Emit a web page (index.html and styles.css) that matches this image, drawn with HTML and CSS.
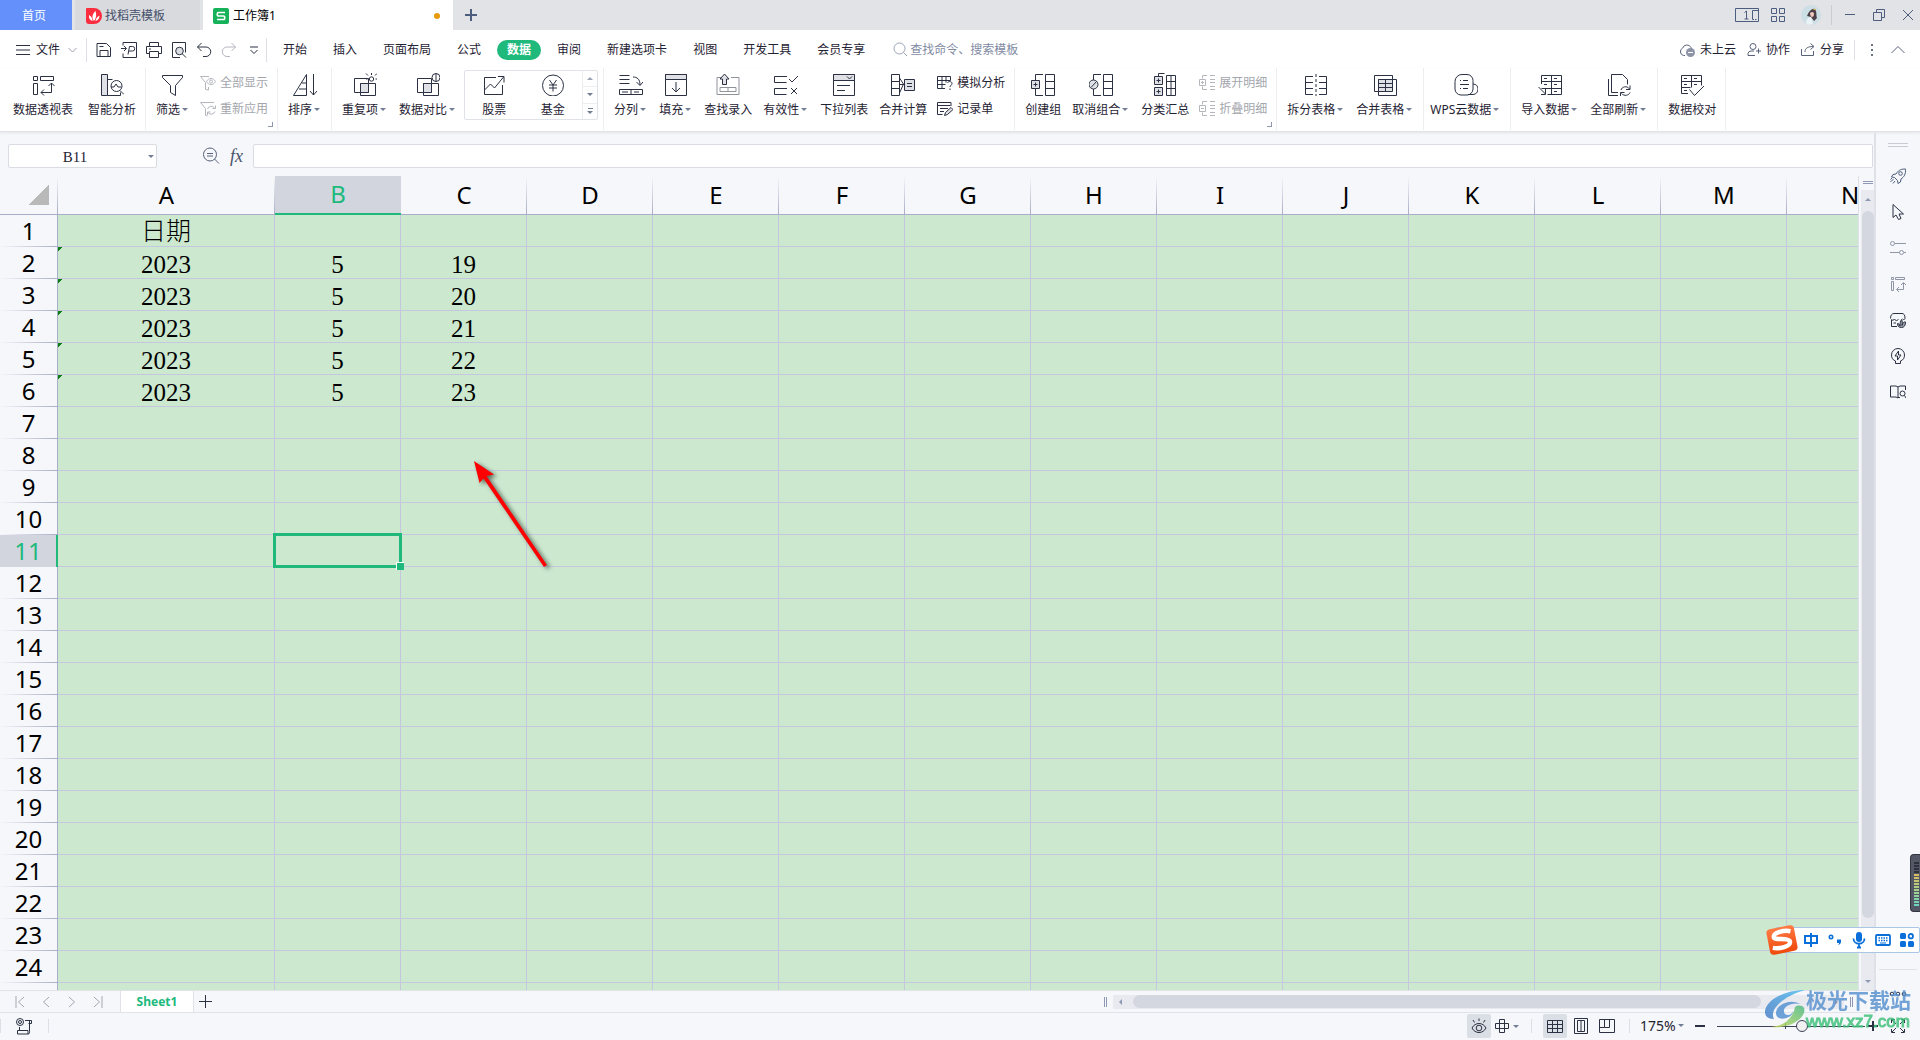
FILE: index.html
```html
<!DOCTYPE html>
<html lang="zh-CN">
<head>
<meta charset="utf-8">
<title>工作簿1</title>
<link rel="stylesheet" href="styles.css">
</head>
<body>
<header class="titlebar">
  <nav class="doc-tabs">
    <button class="doc-tab home">首页</button>
    <button class="doc-tab template">
      <svg width="16" height="16" viewBox="0 0 16 16"><path d="M1 0h7a8 8 0 0 1 0 16H3a3 3 0 0 1-3-3V1a1 1 0 0 1 1-1z" fill="#fb2d3f"/><path d="M8 13C5.500 10.500 6 6 9.500 3c1.200 3.500 1 7-1.500 10zM6.500 13C4 12.500 2.500 10 3 7c2 1 3.500 3 3.500 6zM9.500 13c.3-2.500 1.800-4.500 4-5.200 0 2.600-1.500 4.700-4 5.200z" fill="#fff"/></svg>
      <span>找稻壳模板</span></button>
    <button class="doc-tab active">
      <svg width="16" height="16" viewBox="0 0 16 16"><rect width="16" height="16" rx="2" fill="#15b25a"/><path d="M12 4.500H5.500a1.200 1.200 0 0 0-1.200 1.200v1A1.200 1.200 0 0 0 5.500 8h5a1.200 1.200 0 0 1 1.200 1.200v1a1.200 1.200 0 0 1-1.200 1.300H4" fill="none" stroke="#fff" stroke-width="1.600"/></svg>
      <span>工作簿1</span><i class="unsaved"></i></button>
    <button class="icon-btn new-tab" aria-label="新建"><svg width="12" height="12" viewBox="0 0 12 12"><path d="M6 0v12M0 6h12" stroke="#4d5d7e" stroke-width="2"/></svg></button>
  </nav>
  <div class="window-tools">
    <svg class="ic-blue" width="24" height="14" viewBox="0 0 24 14"><path d="M.5.5h23v13H.500zM23 2.500h-5.500v9h1.500"/><path d="M9.500 4.500l2-1.500v8M9.500 11h4M20 11.500h1.500"/></svg>
    <svg class="ic-blue" width="14" height="14" viewBox="0 0 14 14"><path d="M.5.500h5v5h-5zM8.500.500h5v5h-5zM.5 8.500h5v5h-5zM8.500 8.500h5v5h-5z"/></svg>
    <svg class="avatar" width="20" height="20" viewBox="0 0 20 20"><circle cx="10" cy="10" r="10" fill="#ccdfe4"/><path d="M6 11C8 6 11 3 14 4c2 2 1 7 2 9l-3 3-3-4z" fill="#4c3f48"/><path d="M9 8c2-2 4-1 4 1s-1 3-2 3-2-2-2-4z" fill="#f0c9bb"/><path d="M5 18c0-4 3-6 5-6l2 7c-3 1-5 1-7-1z" fill="#e9f2f4"/><path d="M12 4l3 1" stroke="#d7b55b"/></svg>
    <i class="vsep"></i>
    <button class="icon-btn" aria-label="最小化"><svg class="ic-blue" width="12" height="12" viewBox="0 0 12 12"><path d="M1 5.500h10"/></svg></button>
    <button class="icon-btn" aria-label="还原"><svg class="ic-blue" width="12" height="12" viewBox="0 0 12 12"><path d="M.5 3.500h8v8h-8zM3.500 3V.500h8v8H9"/></svg></button>
    <button class="icon-btn" aria-label="关闭"><svg class="ic-blue" width="12" height="12" viewBox="0 0 12 12"><path d="M1 1l10 10M11 1L1 11"/></svg></button>
  </div>
</header>

<div class="menubar">
  <button class="file-btn"><svg width="14" height="12" viewBox="0 0 14 12"><path d="M0 1.500h14M0 6h14M0 10.500h14"/></svg><span>文件</span><svg class="chev" width="9" height="6" viewBox="0 0 9 6"><path d="M.5 1l4 4 4-4"/></svg></button>
  <i class="vsep"></i>
  <div class="quick">
    <button aria-label="保存"><svg width="16" height="16" viewBox="0 0 16 16"><path d="M1 1.500h9.500l4 4v9H1zM4 14V8.500h8V14M3.500 4.500h4"/></svg></button>
    <button aria-label="输出为PDF"><svg width="16" height="16" viewBox="0 0 16 16"><path d="M2 3.500v-3h13.500v15H2v-4M0 6.500h5M3 4l2.500 2.500L3 9M7 12.500L8.500 4.500h3a2 2 0 0 1 0 4.500H8"/></svg></button>
    <button aria-label="打印"><svg width="16" height="16" viewBox="0 0 16 16"><path d="M3.500 4.500v-4h9v4M3.500 11.500h-3v-7h15v7h-3M3.500 9.500h9v6h-9zM3 7h2"/></svg></button>
    <button aria-label="打印预览"><svg width="16" height="16" viewBox="0 0 16 16"><path d="M9 15.500H1.500V.500h13v10"/><circle cx="8.500" cy="9" r="3.800" fill="#dcdee3"/><path d="M11.500 12l3.500 3.500"/></svg></button>
    <button aria-label="撤销"><svg width="16" height="16" viewBox="0 0 16 16"><path d="M5.500 1L1.500 5l4 4M1.500 5H10a4.700 4.700 0 0 1 0 9.500H7"/></svg></button>
    <button class="off" aria-label="恢复"><svg width="16" height="16" viewBox="0 0 16 16"><path d="M10.500 1l4 4-4 4M14.500 5H6a4.700 4.700 0 0 0 0 9.500h3"/></svg></button>
    <button aria-label="更多"><svg width="10" height="10" viewBox="0 0 10 10"><path d="M1 2h8M1.500 5L5 8.500 8.500 5"/></svg></button>
  </div>
  <i class="vsep"></i>
  <nav class="tabs">
    <button>开始</button><button>插入</button><button>页面布局</button><button>公式</button><button class="on">数据</button><button>审阅</button><button>新建选项卡</button><button>视图</button><button>开发工具</button><button>会员专享</button>
  </nav>
  <label class="search"><svg width="15" height="15" viewBox="0 0 15 15"><circle cx="6.500" cy="6.500" r="5.500"/><path d="M10.500 10.500L14 14"/></svg><input type="text" placeholder="查找命令、搜索模板" aria-label="查找命令、搜索模板"></label>
  <div class="share">
    <button><svg width="16" height="14" viewBox="0 0 16 14"><path d="M6 12.500H4.500a4 4 0 0 1-.8-7.500A4.500 4.500 0 0 1 12 4.500l1 2"/><circle cx="11.500" cy="9.500" r="4.500" fill="#8d94a8" stroke="none"/><path d="M9 9.500h5" stroke="#fff"/></svg><span>未上云</span></button>
    <button><svg width="14" height="14" viewBox="0 0 14 14"><circle cx="6" cy="3.500" r="3"/><path d="M8 12.500H1v-2a3 3 0 0 1 3-2.500h3M9 8h5M11.500 5.500v5"/></svg><span>协作</span></button>
    <button><svg width="14" height="14" viewBox="0 0 14 14"><path d="M.5 6v6.500h12V8M4 9c0-4 3-5.500 8.500-5.500M9.500.500l3.500 3-3.500 3"/></svg><span>分享</span></button>
    <i class="vsep"></i>
    <button aria-label="更多选项"><svg class="dots" width="4" height="14" viewBox="0 0 4 14"><path d="M1 1h2v2H1zM1 6h2v2H1zM1 11h2v2H1z"/></svg></button>
    <button aria-label="收起功能区"><svg width="14" height="9" viewBox="0 0 14 9"><path d="M.5 8L7 1.500 13.500 8"/></svg></button>
  </div>
</div>

<div class="ribbon">
  <section class="group first">
    <button class="tool"><svg width="24" height="24" viewBox="0 0 24 24"><path d="M2.500 4.500h4v4h-4zM9.500 4.500h13v4h-13zM2.500 11.500h4v11h-4zM10 20.500h10.500V11M13 17.500l-3 3 3 3M17.500 14l3-3 3 3"/></svg><span>数据透视表</span></button>
    <button class="tool"><svg width="24" height="24" viewBox="0 0 24 24"><path class="f" d="M1.500 2.500h6v21h-6z"/><path d="M7.500 7.500h5M7.500 23.500h13v-3"/><circle cx="16.500" cy="14" r="5.500"/><path d="M20 18.500l4 4M11 15h3l2-3 2 3h3"/></svg><span>智能分析</span></button>
  </section>
  <section class="group">
    <button class="tool drop"><svg width="24" height="24" viewBox="0 0 24 24"><path d="M1.500 3.500h20v2l-7 8v10l-5-3v-7l-8-8z"/></svg><span>筛选</span></button>
    <div class="stack off">
      <button><svg width="16" height="16" viewBox="0 0 16 16"><path d="M9 1.500H.500l5 6v7l3 .5v-3"/><path d="M6.500 6.500c2-4 7-4 9 0-2 4-7 4-9 0z"/><circle cx="11" cy="6.500" r="1.500"/></svg><span>全部显示</span></button>
      <button><svg width="16" height="16" viewBox="0 0 16 16"><path d="M14 1.500H.500l5 6v7l2 .5M7.500 8a4 4 0 0 1 7-1M15.500 4.500V7.500h-3M15 10.500a4 4 0 0 1-7 1M7.500 14v-3h3"/></svg><span>重新应用</span></button>
    </div>
    <i class="launcher"></i>
  </section>
  <section class="group">
    <button class="tool drop"><svg width="24" height="24" viewBox="0 0 24 24"><path d="M13.500 2.500v21H.500zM9 11h4.500M6 17h7.500M20.500 2v21M17 19l3.500 4 3.500-4"/></svg><span>排序</span></button>
  </section>
  <section class="group">
    <button class="tool drop"><svg width="24" height="24" viewBox="0 0 24 24"><path d="M1.500 6.500h14v14h-14z"/><path d="M7.500 11.500h15v12h-15z"/><path class="f" d="M7.500 11.500h8v9h-8z"/><circle cx="18.500" cy="7" r="2.200"/><path d="M18.500 1v2M13 1.500l2 2M24 1.500l-2 2M13 7h1.500M22.500 7H25"/></svg><span>重复项</span></button>
    <button class="tool drop"><svg width="24" height="24" viewBox="0 0 24 24"><path d="M1.500 6.500h14v14h-14z"/><path d="M7.500 11.500h15v12h-15z"/><path class="f" d="M7.500 11.500h8v9h-8z"/><circle cx="20" cy="5.500" r="4" fill="#fff"/><path d="M20 1.500v8"/></svg><span>数据对比</span></button>
    <div class="gallery">
      <button class="tool"><svg width="24" height="24" viewBox="0 0 24 24"><path d="M14 5.500H2.500v17h18V13M2.500 18l6-6 4 4L21.500 5M16 4.500h6v6"/></svg><span>股票</span></button>
      <button class="tool"><svg width="24" height="24" viewBox="0 0 24 24"><circle cx="12" cy="13.500" r="10.500"/><path d="M8.500 8l3.500 5 3.500-5M8 13h8M8 16h8M12 13v6.500"/></svg><span>基金</span></button>
      <div class="spin"><button class="up" aria-label="上一行"></button><button class="down" aria-label="下一行"></button><button class="down bar" aria-label="展开"></button></div>
    </div>
  </section>
  <section class="group">
    <button class="tool drop"><svg width="24" height="24" viewBox="0 0 24 24"><path d="M.5 3.500h10M.500 7.500h10M.500 11.500h10M14 5c4 0 7 2 7 8M17.500 10l3.500 3.500 3-3.500M.500 17.500h23v5H.500zM12 17.500v5M3 20h6M15 20h5"/></svg><span>分列</span></button>
    <button class="tool drop"><svg width="24" height="24" viewBox="0 0 24 24"><path d="M1.500 2.500h21v21h-21z"/><path class="f" d="M1.500 2.500h21v5h-21z"/><path d="M12 10v10M8 16l4 4 4-4"/></svg><span>填充</span></button>
    <button class="tool"><svg width="24" height="24" viewBox="0 0 24 24"><path class="soft" d="M5 5.500H1v17h22v-17h-8M4 15.500h16v4H4zM12 15.500v4"/><path class="f" d="M6.500 12.500V7H4l4.500-5L13 7h-2.500v5.500z"/></svg><span>查找录入</span></button>
    <button class="tool drop"><svg width="24" height="24" viewBox="0 0 24 24"><path d="M13 4.500H.500v6h12M13 16.500H.500v6h12M15 7l3 3 6-6M17 16l6 6M23 16l-6 6"/></svg><span>有效性</span></button>
    <button class="tool"><svg width="24" height="24" viewBox="0 0 24 24"><path d="M1.500 2.500h21v21h-21z"/><path class="f" d="M1.500 2.500h21v6h-21z"/><path d="M15 4.500l2.500 2.500L20 4.500M5 13.500h13M5 18.500h8"/></svg><span>下拉列表</span></button>
    <button class="tool"><svg width="24" height="24" viewBox="0 0 24 24"><path d="M.500 2.500h8v21h-8zM.500 9.500h8M.500 16.500h8M8.500 6l4 6-4 9M8.500 12.500h5"/><path class="f" d="M13.500 7.500h10v11h-10z"/><path d="M16 11.500h5M16 14.500h5"/></svg><span>合并计算</span></button>
    <div class="stack">
      <button><svg width="16" height="16" viewBox="0 0 16 16"><path d="M8 13.500H.500V1.500h13v4M.500 5.500h13M.500 9.500h8M5 1.500v12M9 1.500v6M10.500 8c.5-2 4.500-2 4.500.5 0 1.500-2 2-2 3.500M13 13.500v1.500"/></svg><span>模拟分析</span></button>
      <button><svg width="16" height="16" viewBox="0 0 16 16"><path d="M14 5V1.500H.500v12h5M.500 4.500h13M3 7.500h8M3 10.500h4"/><path class="f" d="M7.500 14.500l1-3 5.500-5 2 2-5.500 5z"/></svg><span>记录单</span></button>
    </div>
  </section>
  <section class="group">
    <button class="tool"><svg width="24" height="24" viewBox="0 0 24 24"><path d="M12 2.500H4.500v21H12M14.500 2.500h9v21h-9zM14.500 9.500h9M14.500 16.500h9"/><path class="f" d="M.500 8.500h8v8h-8z"/><path d="M4.500 10.500v4M2.500 12.500h4"/></svg><span>创建组</span></button>
    <button class="tool drop"><svg width="24" height="24" viewBox="0 0 24 24"><path d="M12 2.500H4.500v21H12M14.500 2.500h9v21h-9zM14.500 9.500h9M14.500 16.500h9"/><circle class="f" cx="4.500" cy="12.500" r="4.500"/><path d="M2 15.500l5.500-6"/></svg><span>取消组合</span></button>
    <button class="tool"><svg width="24" height="24" viewBox="0 0 24 24"><path d="M5.500 4V1.500h6M13.500 3.500h9v20h-9zM13.500 9.500h9M13.500 16.500h9M18 3.500v20"/><path class="f" d="M1.500 4.500h8v8h-8zM1.500 15.500h8v8h-8z"/><path d="M5.500 6.500v4M3.500 8.500h4M5.500 17.500v4M3.500 19.500h4"/></svg><span>分类汇总</span></button>
    <div class="stack off">
      <button><svg width="16" height="16" viewBox="0 0 16 16"><path d="M8 .500H3.500v3M3.500 11.500v3H8M.500 4.500h6v6h-6zM3.500 6v3M2 7.500h3M11 .500h5M11 4.500h5M11 7.500h5M11 11.500h5M11 14.500h5"/></svg><span>展开明细</span></button>
      <button><svg width="16" height="16" viewBox="0 0 16 16"><path d="M8 .500H3.500v3M3.500 11.500v3H8M.500 4.500h6v6h-6zM2 7.500h3M11 .500h5M11 4.500h5M11 7.500h5M11 11.500h5M11 14.500h5"/></svg><span>折叠明细</span></button>
    </div>
    <i class="launcher"></i>
  </section>
  <section class="group">
    <button class="tool drop"><svg width="24" height="24" viewBox="0 0 24 24"><path d="M9 4.500H1.500v18H9M1.500 10.500H9M1.500 16.500H9M15 4.500h7.500v18H15M22.500 10.500H15M22.500 16.500H15"/><path d="M12 2v22" stroke-dasharray="3 2"/></svg><span>拆分表格</span></button>
    <button class="tool drop"><svg width="24" height="24" viewBox="0 0 24 24"><path d="M5 19.500H1.500v-16h18V7M5.500 23.500v-16h18v16z"/><path class="f" d="M5.500 7.500h14v12h-14z"/><path d="M5.500 11.500h14M5.500 15.500h14M12.500 7.500v12"/></svg><span>合并表格</span></button>
  </section>
  <section class="group cloud">
    <button class="tool drop"><svg width="24" height="24" viewBox="0 0 24 24"><path d="M8 2.500h5a6 6 0 0 1 6 6V17a6 6 0 0 1-6 6H7a6 6 0 0 1-6-6V9.500a7 7 0 0 1 7-7zM19 12c3 0 5 2 5 5s-2 5.500-5 5.500h-5M6 8.500h1M9 8.500h5M6 12.500h9M6 16.500h1M9 16.500h5"/></svg><span>WPS云数据</span></button>
  </section>
  <section class="group">
    <button class="tool drop"><svg width="24" height="24" viewBox="0 0 24 24"><path d="M3.500 12V3.500h20v19h-14M3.500 9.500h20M3.500 16.500h20M13.500 3.500v19M6 6.500h3M16 6.500h3M6 12.500h3M16 12.500h3M16 19.500h3M.500 15l7 7M7.500 17v5.500H3"/></svg><span>导入数据</span></button>
    <button class="tool drop"><svg width="24" height="24" viewBox="0 0 24 24"><path d="M11 20.500H4.500v-18h11l5 5v5M1.500 7v16.500H11M14 18c.5-3 6-5 8.500-1M23 13.500v4h-4M23 20.500c-1 3-6 4-8.500 1M13.500 24v-3.500h4"/></svg><span>全部刷新</span></button>
  </section>
  <section class="group">
    <button class="tool"><svg width="24" height="24" viewBox="0 0 24 24"><path d="M8 21.500H1.500v-18h20v10M1.500 9.500h20M1.500 15.500h9M11.500 3.500v12M4 6.500h3M14 6.500h3M4 12.500h3M14 12.500h3M4 18.500h3M9.500 17.500l5 6L24 14"/></svg><span>数据校对</span></button>
  </section>
</div>

<main class="workspace">
  <div class="sheet-pane">
    <div class="formula-bar">
      <div class="name-box"><input type="text" value="B11" aria-label="名称框"></div>
      <svg class="lens" width="18" height="18" viewBox="0 0 18 18"><circle cx="8" cy="7.500" r="6.500"/><path d="M12.500 12l4.500 4.500M5 6.500h6M5 9h6"/></svg>
      <span class="fx">fx</span>
      <input class="formula" type="text" aria-label="编辑栏">
    </div>
    <div class="grid-area">
      <div class="grid">
        <table id="cells"></table>
        <svg class="arrow" width="90" height="120" viewBox="0 0 90 120"><path d="M4 5l20 13.500-7.500 1.500L77 109l-3 2L13.500 22.500 9.500 27z" fill="#fe0000"/></svg>
      </div>
      <div class="vscroll">
        <i class="split"></i>
        <div class="track"><i class="tri up"></i><i class="thumb"></i><i class="tri down"></i></div>
      </div>
    </div>
    <div class="sheet-tabs">
      <div class="sheet-nav">
        <button aria-label="第一张"><svg width="10" height="12" viewBox="0 0 10 12"><path d="M1 0v12M9 1L3.500 6 9 11"/></svg></button>
        <button aria-label="上一张"><svg width="10" height="12" viewBox="0 0 10 12"><path d="M8 1L2.500 6 8 11"/></svg></button>
        <button aria-label="下一张"><svg width="10" height="12" viewBox="0 0 10 12"><path d="M2 1l5.500 5L2 11"/></svg></button>
        <button aria-label="最后一张"><svg width="10" height="12" viewBox="0 0 10 12"><path d="M9 0v12M1 1l5.500 5L1 11"/></svg></button>
      </div>
      <button class="sheet on">Sheet1</button>
      <button class="add" aria-label="新建工作表"><svg width="13" height="13" viewBox="0 0 13 13"><path d="M6.500 0v13M0 6.500h13"/></svg></button>
      <i class="hsplit"></i>
      <div class="hscroll"><i class="tri left"></i><i class="thumb"></i><i class="tri right"></i></div>
      <i class="hsplit end"></i>
    </div>
  </div>
  <aside class="side">
    <i class="grip"></i>
    <button aria-label="助手"><svg class="ic-blue" width="16" height="16" viewBox="0 0 16 16"><path d="M15 1c-5 0-7 2-9 5L3 6.500 1.500 9l3 .5 3 3 .5 3 2.500-1.500.5-3c3-2 5-5 4.500-10z"/><circle cx="10.500" cy="5.500" r="1.800"/><path d="M3.500 11L.500 14M5 13l-2 2.500M2 10L.500 11.500"/></svg></button>
    <button aria-label="选择"><svg width="16" height="16" viewBox="0 0 16 16"><path d="M3 .500v13l3-2.500 2.500 4.500 2.500-1-2-4.500h4.500z"/></svg></button>
    <button class="dim" aria-label="属性"><svg width="16" height="16" viewBox="0 0 16 16"><circle cx="2.500" cy="3.500" r="2"/><path d="M5 3.500h11M0 12.500h9M14 12.500h2"/><circle cx="11.500" cy="12.500" r="2"/></svg></button>
    <button class="dim" aria-label="分析"><svg width="16" height="16" viewBox="0 0 16 16"><path d="M1.500 1.500h2v2h-2zM5.500 1.500h9v2h-9zM1.500 5.500h2v9h-2zM7 13.500h6.500V7M9 11l-2.500 2.500L9 16M11 9l2.500-2.500L16 9"/></svg></button>
    <button aria-label="图库"><svg width="16" height="16" viewBox="0 0 16 16"><path d="M1.500 8v6.500H7M.500 6.500C.500 3 2 1.500 4 1.500h8c2 0 3 1.500 3 5 0 1-1.500 1.500-2.500.5M1 7.500c1 1 3 1 3.500-.5 1 2 3 2 4 0M3.500 11h2.500"/><path d="M7.500 11.500c1.500 0 2 1 2.500 2.500 0-3 .5-5 1.500-6.500 1 1.500 1 3.500.5 6 1-3 2-4 3.500-3.500 0 3-1 5.500-4 5.500s-4-1.500-4-4z" fill="#9da2ac"/></svg></button>
    <button aria-label="智能"><svg width="16" height="16" viewBox="0 0 16 16"><path d="M5.500 13C2.500 12 1.500 9.500 1.500 7a6.500 6.500 0 0 1 13 0c0 2.500-1 5-4 6v2.500h-5zM8.500 3L5 8h2.500v4L11 7H8.500z"/></svg></button>
    <button aria-label="查阅"><svg width="16" height="16" viewBox="0 0 16 16"><path d="M8 14L6 13H.500V2H6l2 1 2-1h5.500v4M8 3v11M8 13.500h2"/><circle cx="12.500" cy="9.500" r="2.500"/><path d="M14.500 11.500l1.500 2.500"/></svg></button>
    <div class="side-foot"><button aria-label="更多工具"><svg width="18" height="6" viewBox="0 0 18 6"><circle cx="3" cy="3" r="1.800"/><circle cx="9" cy="3" r="1.800"/><circle cx="15" cy="3" r="1.800"/></svg></button></div>
  </aside>
</main>

<footer class="status">
  <i class="vsep"></i>
  <button class="macro" aria-label="宏"><svg width="17" height="17" viewBox="0 0 17 17"><circle cx="4" cy="4" r="3.500"/><circle cx="4" cy="4" r="1.500"/><path d="M9 2.500h6.500v3h-3M13.500 3v10M3.500 9v3M1.500 12.500h10.500v3.500H1.500zM12 16c2 0 1.500-2 1.500-4"/></svg></button>
  <i class="vsep"></i>
  <div class="views">
    <button class="view on" aria-label="护眼模式"><svg width="16" height="16" viewBox="0 0 16 16"><path d="M1 10c3-6 11-6 14 0-3 6-11 6-14 0zM2 2l1.500 2.500M8 .500V3M14 2l-1.500 2.500"/><circle cx="8" cy="10" r="2.800"/></svg></button>
    <button class="view drop" aria-label="阅读模式"><svg width="16" height="16" viewBox="0 0 16 16"><path d="M5.500 1.500h5v13h-5zM1.500 5.500h13v5h-13z"/></svg></button>
    <i class="vsep"></i>
    <button class="view on" aria-label="普通视图"><svg width="16" height="16" viewBox="0 0 16 16"><path d="M.500 2.500h15v12H.500zM.500 6.500h15M.500 10.500h15M5.500 2.500v12M10.500 2.500v12"/></svg></button>
    <button class="view" aria-label="分页预览"><svg width="16" height="16" viewBox="0 0 16 16"><path d="M1.500.500h13v15h-13zM4.500 2.500h7v11h-7zM8 2.500v11"/></svg></button>
    <button class="view" aria-label="页面布局"><svg width="16" height="16" viewBox="0 0 16 16"><path d="M.500 1.500h15v13H.500zM5.500 1.500v8h5v-8M.500 9.500h5"/></svg></button>
    <i class="vsep"></i>
    <button class="zoom-val">175%</button>
    <button class="icon-btn" aria-label="缩小"><svg width="10" height="12" viewBox="0 0 10 12"><path d="M0 6h10" stroke-width="2"/></svg></button>
    <div class="zoom"><input type="range" min="0" max="100" value="58" aria-label="显示比例"></div>
    <button class="icon-btn" aria-label="放大"><svg width="10" height="12" viewBox="0 0 10 12"><path d="M0 6h10M5 1v10" stroke-width="2"/></svg></button>
    <button class="icon-btn full" aria-label="全屏"><svg width="14" height="14" viewBox="0 0 14 14"><path d="M.500 4V.500H4M10 .500h3.500V4M13.500 10v3.500H10M4 13.500H.500V10M1 1l4 4M13 1L9 5M13 13L9 9M1 13l4-4"/></svg></button>
  </div>
</footer>

<i class="meter"></i>

<div class="ime">
  <svg class="ime-logo" width="32" height="32" viewBox="0 0 32 32"><defs><linearGradient id="og" x2="0" y2="1"><stop stop-color="#ff7b45"/><stop offset="1" stop-color="#f04a0c"/></linearGradient></defs><g transform="rotate(-11 16 16)"><rect x="2" y="3" width="28" height="26" rx="4" fill="url(#og)"/><path d="M26 9C20 6.500 9 7 8.500 11.500 8 15.500 24 14.500 23.500 19.500 23 24 12 24.500 5.500 22" fill="none" stroke="#fff" stroke-width="4.500"/></g></svg>
  <svg class="glyph" width="16" height="16" viewBox="0 0 16 16"><path d="M2 4h12v7H2zM8 1v14" fill="none" stroke="#0a6fd8" stroke-width="2"/></svg>
  <svg class="glyph" width="14" height="16" viewBox="0 0 14 16"><circle cx="3" cy="5" r="1.700" fill="none" stroke="#0a6fd8" stroke-width="1.600"/><path d="M9 7.500h4v2c0 2-1 3-3 3.500 1-1 1-1.500 1-2H9z" fill="#0a6fd8"/></svg>
  <svg class="glyph" width="14" height="18" viewBox="0 0 14 18"><rect x="4" y="1" width="6" height="10" rx="3" fill="#0a6fd8"/><path d="M1.500 7.500c0 7 11 7 11 0M7 13v4M5 16.500h4" fill="none" stroke="#0a6fd8" stroke-width="1.800"/></svg>
  <svg class="glyph" width="16" height="14" viewBox="0 0 16 14"><rect x="1" y="2" width="14" height="10" rx="1" fill="none" stroke="#0a6fd8" stroke-width="1.800"/><path d="M3.500 5h9M3.500 7.500h9" stroke="#0a6fd8" stroke-width="1.500" stroke-dasharray="1.500 1"/><path d="M5 10h6" stroke="#0a6fd8"/></svg>
  <svg class="glyph" width="14" height="14" viewBox="0 0 14 14"><g fill="#0a6fd8"><rect width="6" height="6" rx="1.500"/><rect y="8" width="6" height="6" rx="1.500"/><rect x="8" y="8" width="6" height="6" rx="1.500"/></g><circle cx="10.800" cy="3.200" r="2.200" fill="none" stroke="#0a6fd8" stroke-width="1.800"/></svg>
</div>

<div class="brand">
  <svg width="42" height="40" viewBox="0 0 42 40"><defs><linearGradient id="bl" x1="1" x2="0" y2="1"><stop stop-color="#55bdf0"/><stop offset="1" stop-color="#4a7fc5"/></linearGradient><linearGradient id="gr" x1="0" y1="1" x2="1" y2="0"><stop stop-color="#c6d95a"/><stop offset="1" stop-color="#4cba84"/></linearGradient></defs><path d="M41 1C22 1 3 10 1 22c-.5 5 3 8 9 8C5 20 20 7 41 1z" fill="url(#bl)"/><path d="M12 24c0-8 14-15 24-9-8-2-17 2-16 8 .5 4 8 4 9-1 1 7-17 12-17 2z" fill="#5593d3"/><path d="M7 38c12-1 22-8 24-20 3-2 7-2 9 1 3 7-10 21-33 19z" fill="url(#gr)"/></svg>
  <div class="brand-text"><strong>极光下载站</strong><span>www.xz7.com</span></div>
</div>
<script src="grid.js"></script>
</body>
</html>
```

FILE: styles.css
```css
* { box-sizing: border-box; }

body {
  margin: 0;
  height: 100vh;
  display: flex;
  flex-direction: column;
  overflow: hidden;
  background: #f5f7fa;
  color: #1f2333;
  font: 12px/18px "Noto Sans", "Noto Sans CJK SC", sans-serif;
}

button, input {
  font: inherit;
  color: inherit;
  margin: 0;
  padding: 0;
  border: 0;
  background: none;
}

button { white-space: nowrap; }

svg { display: block; flex: none; fill: none; stroke: #2b3142; stroke-width: 1; }
svg defs, .doc-tab svg, .avatar, .arrow, .ime svg, .brand svg { stroke: none; }
svg .f { fill: #dfe1e6; }
svg .soft { stroke: #8f939c; }
.ic-blue { stroke: #4d5d7e; }

.vsep { width: 1px; height: 24px; background: #dcdfe6; flex: none; }
.icon-btn { display: flex; align-items: center; justify-content: center; }

/* title bar */
.titlebar { flex: none; height: 30px; display: flex; justify-content: space-between; background: #e2e3e7; }
.doc-tabs { display: flex; }
.doc-tab { display: flex; align-items: center; height: 30px; padding-top: 1px; }
.doc-tab.home { width: 72px; padding-right: 4px; justify-content: center; background: #6490fb; color: #fff; }
.doc-tab.template { width: 125px; margin: 0 3px; padding-left: 11px; gap: 3px; background: #d9dade; color: #45506a; }
.doc-tab.active { width: 250px; padding: 1px 13px 0 10px; gap: 4px; background: #fff; color: #000; }
.unsaved { width: 6px; height: 6px; margin-left: auto; border-radius: 50%; background: #e69a09; }
.new-tab { width: 36px; }
.window-tools { display: flex; align-items: center; gap: 12px; padding-right: 4px; }
.window-tools .avatar { margin-left: 4px; }
.window-tools .vsep { height: 20px; margin: 0 -3px 0 -2px; background: #c9cbd1; }
.window-tools .icon-btn { width: 17px; }

/* menu row */
.menubar { flex: none; display: flex; align-items: center; height: 38px; padding-top: 1px; background: #fff; }
.file-btn { display: flex; align-items: center; gap: 6px; padding: 0 9px 0 16px; }
.file-btn .chev { margin-left: 2px; stroke: #9a9fab; }
.quick { display: flex; padding-left: 4px; }
.quick button { width: 25px; height: 24px; display: flex; align-items: center; justify-content: center; }
.quick .off svg { stroke: #b4b7bf; }
.tabs { display: flex; gap: 6px; padding-left: 6px; }
.tabs button { height: 20px; line-height: 20px; padding: 0 10px; border-radius: 10px; }
.tabs .on { background: #20b97c; color: #fff; font-weight: 700; }
.search { display: flex; align-items: center; gap: 2px; margin-left: 18px; }
.search svg { stroke: #9aa3b8; }
.search input { width: 120px; outline: 0; }
.search input::placeholder { color: #7f8aa3; opacity: 1; }
.share { display: flex; align-items: center; gap: 11px; margin-left: auto; padding-right: 15px; }
.share button { display: flex; align-items: center; gap: 5px; }
.share svg { stroke: #59627a; }
.share .vsep { height: 20px; margin-left: -1px; }
.share .vsep + button { padding: 0 6px 0 4px; }
.share .dots { fill: #6b7285; stroke: none; }

/* ribbon */
.ribbon { flex: none; display: flex; height: 64px; background: #fff; border-bottom: 1px solid #e0e3e8; box-shadow: 0 1px 2px #e3e5ea; position: relative; }
.group { position: relative; display: flex; align-items: flex-start; gap: 11px; padding: 4px 9px 0 10px; height: 62px; border-right: 1px solid #eceef1; }
.group.first { gap: 15px; padding-left: 13px; }
.group.cloud { padding-left: 6px; }
.tool { display: flex; flex-direction: column; align-items: center; gap: 5px; }
.tool.drop span { padding-right: 10px; position: relative; }
.drop > span::after, .view.drop::after, .zoom-val::after, .name-box::after {
  content: "";
  position: absolute;
  right: 2px;
  top: 7px;
  border: 3px solid transparent;
  border-top-color: #727d96;
  border-bottom: 0;
}
.stack { display: flex; flex-direction: column; gap: 6px; margin-left: -1px; padding-top: 1px; }
.stack button { display: flex; align-items: center; gap: 4px; height: 20px; }
.stack.off { color: #a4a6ad; }
.stack.off svg { stroke: #b4b6bc; }
.launcher { position: absolute; right: 4px; bottom: 3px; width: 5px; height: 5px; border: solid #8d96ab; border-width: 0 1px 1px 0; }
.gallery { display: flex; width: 134px; height: 50px; margin: -2px -4px 0; border: 1px solid #dfe2e7; border-radius: 2px; }
.gallery .tool { flex: 1; padding-top: 1px; }
.spin { width: 15px; display: flex; flex-direction: column; border-left: 1px solid #eceef1; }
.spin button { flex: 1; display: flex; align-items: center; justify-content: center; position: relative; }
.spin button + button { border-top: 1px solid #eceef1; }
.spin button::before { content: ""; border: 3px solid transparent; }
.spin .up::before { border-bottom-color: #99a1b3; border-top: 0; }
.spin .down::before { border-top-color: #727d96; border-bottom: 0; }
.spin .bar { flex-direction: column; gap: 2px; }
.spin .bar::before { order: 2; }
.spin .bar::after { content: ""; width: 5px; height: 1px; background: #727d96; }

/* workspace */
.workspace { flex: 1; min-height: 0; display: flex; }
.sheet-pane { flex: 1; min-width: 0; display: flex; flex-direction: column; border-right: 2px solid #dfe1e9; }
.formula-bar { flex: none; display: flex; align-items: center; height: 44px; padding: 4px 1px 0 8px; }
.name-box { position: relative; width: 149px; height: 24px; border: 1px solid #d9dce2; border-radius: 2px; background: #fff; }
.name-box input { width: 132px; height: 24px; text-align: center; font: 15px "Liberation Serif", serif; }
.name-box::after { top: 10px; }
.lens { margin: 0 10px 0 45px; stroke: #59627a; }
.fx { width: 23px; font: italic 18px/24px "Liberation Serif", serif; color: #4a5268; }
.formula { flex: 1; height: 24px; border: 1px solid #d9dce2; border-radius: 2px; background: #fff; }

.grid-area { flex: 1; min-height: 0; display: flex; }
.grid { flex: 1; min-width: 0; position: relative; overflow: hidden; }
.grid table { table-layout: fixed; width: 0; border-collapse: separate; border-spacing: 0; }
.grid col { width: 126px; }
.grid .col-head { width: 58px; }
.grid .col-a { width: 217px; }
.grid th { padding: 0; font: 24px/28px "Noto Sans", sans-serif; color: #000; text-align: center; }
.grid thead th {
  height: 39px;
  padding-bottom: 1px;
  border-bottom: 1px solid #a9aec8;
  background: linear-gradient(#f5f7fa, #a9aec8) right / 1px 100% no-repeat #f5f7fa;
}
.grid tbody th {
  height: 32px;
  padding-bottom: 1px;
  border-right: 1px solid #a9aec8;
  background: linear-gradient(90deg, #f5f7fa, #a9aec8) bottom / 100% 1px no-repeat #f5f7fa;
}
.grid thead .on { background: #d2d5de; color: #20b97c; border-bottom: 2px solid #20b97c; }
.grid tbody .on { background: #d2d5de; color: #20b97c; border-right: 2px solid #20b97c; }
.grid .corner::after { content: ""; display: block; width: 20px; height: 20px; margin: 0 0 0 29px; background: linear-gradient(135deg, transparent 50%, #b9b9b9 50%); }
.grid td {
  position: relative;
  height: 32px;
  padding: 4px 0 0;
  border: solid #c4c7de;
  border-width: 0 1px 1px 0;
  background: #cce8cf;
  color: #000;
  text-align: center;
  font: 25px/27px "Liberation Serif", "Noto Sans CJK SC", serif;
}
.grid tr:first-child td { padding: 1px 0 0; font-weight: 300; }
.grid .warn::before { content: ""; position: absolute; left: 0; top: 0; width: 4px; height: 4px; background: linear-gradient(135deg, #0a7d12 60%, transparent 60%); }
.grid .cursor::before { content: ""; position: absolute; inset: -2px; border: 3px solid #20b97c; z-index: 1; }
.grid .cursor::after { content: ""; position: absolute; right: -4px; bottom: -4px; width: 7px; height: 7px; background: #20b97c; border: solid #fff; border-width: 1px 0 0 1px; z-index: 2; }
.arrow { position: absolute; left: 470px; top: 280px; filter: drop-shadow(3px 2px 2px #5a6a5c); }

.vscroll { width: 16px; display: flex; flex-direction: column; border-left: 1px solid #dfe1e9; padding-left: 2px; }
.split { height: 3px; margin: 5px 1px 6px 2px; border: solid #8f99b3; border-width: 1px 0; }
.track { flex: 1; display: flex; flex-direction: column; align-items: center; background: #e9eaf0; padding: 8px 0 7px; }
.vscroll .thumb { width: 12px; flex: 1; margin: 10px 0 62px; border-radius: 6px; background: #d4d7e0; }
.tri { border: 3px solid transparent; }
.tri.up { border-bottom-color: #8f99b3; border-top: 0; }
.tri.down { border-top-color: #8f99b3; border-bottom: 0; }
.tri.left { border-right-color: #8f99b3; border-left: 0; }
.tri.right { border-left-color: #8f99b3; border-right: 0; }

.sheet-tabs { flex: none; display: flex; align-items: center; height: 23px; border: solid #e0e3e8; border-width: 1px 0; }
.sheet-nav { display: flex; gap: 16px; padding: 0 17px 0 15px; }
.sheet-nav svg { stroke: #a3a7b2; }
.sheet { height: 21px; width: 74px; background: #fff; border: solid #e0e3e8; border-width: 0 1px; color: #20b97c; font-weight: 700; }
.add { padding: 0 5px; }
.hsplit { width: 3px; height: 10px; margin-left: auto; border: solid #8f99b3; border-width: 0 1px; }
.hsplit.end { margin: 0 21px 0 6px; }
.hscroll { width: 39%; height: 14px; margin-left: 6px; padding: 0 6px; display: flex; align-items: center; background: #e9eaf0; }
.hscroll .thumb { flex: 1; height: 13px; margin: 0 74px 0 11px; border-radius: 7px; background: #d4d7e0; }

.side { width: 44px; display: flex; flex-direction: column; align-items: center; padding-top: 11px; }
.grip { width: 20px; height: 4px; margin-bottom: 11px; border: solid #c8cbd3; border-width: 1px 0; }
.side button { height: 36px; display: flex; align-items: center; }
.side .dim svg { stroke: #8f96a6; }
.side-foot { margin: auto 3px 0; padding: 6px 10px 1px; border-top: 1px solid #dfe1e6; }

/* status bar */
.status { flex: none; display: flex; align-items: center; height: 27px; padding-bottom: 1px; }
.status .vsep { height: 14px; }
.macro { padding: 0 15px; }
.views { display: flex; align-items: center; margin-left: auto; padding-right: 15px; }
.view { position: relative; height: 24px; width: 24px; display: flex; align-items: center; justify-content: center; border-radius: 2px; }
.view.on { background: #dadee5; }
.view.drop { width: 28px; margin-right: 12px; padding-right: 6px; }
.view.drop::after { top: 11px; right: 0; }
.views .vsep + .view { margin-left: 11px; }
.view:not(.drop) + .view:not(.drop) { margin-left: 2px; }
.view:not(.drop) + .vsep { margin-left: 10px; }
.zoom-val { position: relative; width: 54px; margin-right: 11px; text-align: left; padding-left: 10px; font-size: 14px; }
.zoom-val::after { right: 0; }
.zoom { position: relative; display: flex; width: 148px; margin: 0 3px 0 12px; }
.zoom::before { content: ""; position: absolute; left: 68px; top: 3px; width: 1px; height: 6px; background: #3c4359; }
.zoom input { appearance: none; width: 100%; height: 12px; background: linear-gradient(#3c4359, #3c4359) center / 100% 1px no-repeat; }
.zoom input::-webkit-slider-thumb { appearance: none; width: 12px; height: 12px; border: 1px solid #3c4359; border-radius: 50%; background: #f0f0f0; }
.full { margin-left: 13px; }

/* floating overlays */
.meter {
  position: fixed; right: 0; top: 854px; width: 10px; height: 58px;
  border: 1px solid #33363f; border-right: 0; border-radius: 4px 0 0 4px;
  background:
    repeating-linear-gradient(transparent 0 2px, #545866 2px 3px) 3px 7px / 5px 45px no-repeat,
    linear-gradient(#2e313b 0 12px, #dbb95c 12px, #a7d08a 28px, #66d3c3) 3px 7px / 5px 45px no-repeat,
    #545866;
}
.ime { position: fixed; right: 0; top: 927px; display: flex; align-items: center; height: 26px; width: 145px; padding-right: 5px; justify-content: space-between; background: #fff; border: 1px solid #a9c6e6; border-radius: 2px; }
.ime-logo { margin: 0 -4px 0 -10px; }
.brand { position: fixed; right: 9px; bottom: 9px; display: flex; align-items: center; opacity: .85; }
.brand-text { display: flex; flex-direction: column; }
.brand-text strong { font-size: 21px; line-height: 26px; font-weight: 700; color: #5b93cf; }
.brand-text span { font: 17px/18px "Liberation Sans", sans-serif; color: #42c17c; -webkit-text-stroke: 1px #42c17c; }
```

FILE: grid.js
```js
const columns = "ABCDEFGHIJKLMN".split("");
const rowCount = 24;
const values = {
  A1: "日期",
  A2: "2023", B2: "5", C2: "19",
  A3: "2023", B3: "5", C3: "20",
  A4: "2023", B4: "5", C4: "21",
  A5: "2023", B5: "5", C5: "22",
  A6: "2023", B6: "5", C6: "23"
};
const active = { col: "B", row: 11 };

let html = '<colgroup><col class="col-head"><col class="col-a">' +
  "<col>".repeat(columns.length - 1) + "</colgroup><thead><tr><th class=\"corner\"></th>";
for (const c of columns) {
  html += `<th scope="col"${c === active.col ? ' class="on"' : ""}>${c}</th>`;
}
html += "</tr></thead><tbody>";
for (let r = 1; r <= rowCount; r++) {
  html += `<tr><th scope="row"${r === active.row ? ' class="on"' : ""}>${r}</th>`;
  for (const c of columns) {
    let cls = "";
    if (c === "A" && r > 1 && values[c + r]) cls = ' class="warn"';
    if (c === active.col && r === active.row) cls = ' class="cursor"';
    html += `<td${cls}>${values[c + r] || ""}</td>`;
  }
  html += "</tr>";
}
// a blank row fills the strip below the last numbered one
html += "<tr><th></th>" + "<td></td>".repeat(columns.length) + "</tr>";
document.getElementById("cells").innerHTML = html + "</tbody>";
```
